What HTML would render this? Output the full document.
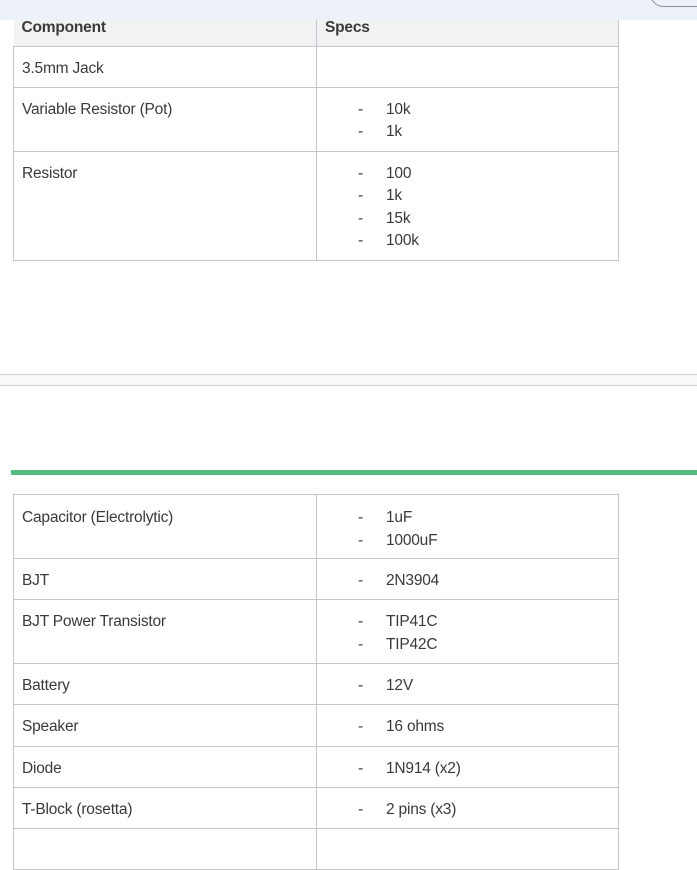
<!DOCTYPE html>
<html><head><style>
*{margin:0;padding:0;box-sizing:border-box}
body{width:697px;height:833px;overflow:hidden;background:#fff;font-family:"Liberation Sans",sans-serif;color:#3a3a3a;position:relative}
.bar{position:absolute;left:0;top:0;width:697px;height:20px;background:#edf1f8}
.pill{position:absolute;left:650px;top:-20px;width:80px;height:27px;border:1px solid #8a8f96;border-radius:14px;background:#edf1f8}
table{position:absolute;left:13px;width:606px;border-collapse:collapse;font-size:15.5px;letter-spacing:-0.2px}
td,th{border:1px solid #c4c6ca;vertical-align:top;text-align:left;padding:0 8px;line-height:22.5px}
td:first-child,th:first-child{width:303px}
th{background:#f1f2f4;font-weight:bold;height:26px;border-top:none}
.l{display:flex}.l span:first-child{width:61px;padding-left:33px;flex:none}
.hr1{position:absolute;left:0;top:374px;width:697px;height:12px;border-top:1px solid #ccc;border-bottom:1px solid #ccc;background:#f8f9fa}
.green{position:absolute;left:11px;top:470px;width:686px;height:5px;background:#55bb83}
</style></head><body>
<table style="top:8px">
<tr><th style="padding-top:9px;height:38px;border-left:none">Component</th><th style="padding-top:9px">Specs</th></tr>
<tr><td style="height:41px;padding-top:11px">3.5mm Jack</td><td></td></tr>
<tr><td style="height:64px;padding-top:11px">Variable Resistor (Pot)</td><td style="padding-top:11px"><div class="l"><span>-</span><span>10k</span></div><div class="l"><span>-</span><span>1k</span></div></td></tr>
<tr><td style="height:109px;padding-top:11px">Resistor</td><td style="padding-top:11px"><div class="l"><span>-</span><span>100</span></div><div class="l"><span>-</span><span>1k</span></div><div class="l"><span>-</span><span>15k</span></div><div class="l"><span>-</span><span>100k</span></div></td></tr>
</table>
<div class="bar"><div class="pill"></div></div>
<div class="hr1"></div>
<div class="green"></div>
<table style="top:494px">
<tr><td style="height:64px;padding-top:12px">Capacitor (Electrolytic)</td><td style="padding-top:12px"><div class="l"><span>-</span><span>1uF</span></div><div class="l"><span>-</span><span>1000uF</span></div></td></tr>
<tr><td style="height:41px;padding-top:11px">BJT</td><td style="padding-top:11px"><div class="l"><span>-</span><span>2N3904</span></div></td></tr>
<tr><td style="height:64px;padding-top:11px">BJT Power Transistor</td><td style="padding-top:11px"><div class="l"><span>-</span><span>TIP41C</span></div><div class="l"><span>-</span><span>TIP42C</span></div></td></tr>
<tr><td style="height:41px;padding-top:11px">Battery</td><td style="padding-top:11px"><div class="l"><span>-</span><span>12V</span></div></td></tr>
<tr><td style="height:42px;padding-top:11px">Speaker</td><td style="padding-top:11px"><div class="l"><span>-</span><span>16 ohms</span></div></td></tr>
<tr><td style="height:41px;padding-top:11px">Diode</td><td style="padding-top:11px"><div class="l"><span>-</span><span>1N914 (x2)</span></div></td></tr>
<tr><td style="height:41px;padding-top:11px">T-Block (rosetta)</td><td style="padding-top:11px"><div class="l"><span>-</span><span>2 pins (x3)</span></div></td></tr>
<tr><td style="height:41px"></td><td></td></tr>
</table>
</body></html>
